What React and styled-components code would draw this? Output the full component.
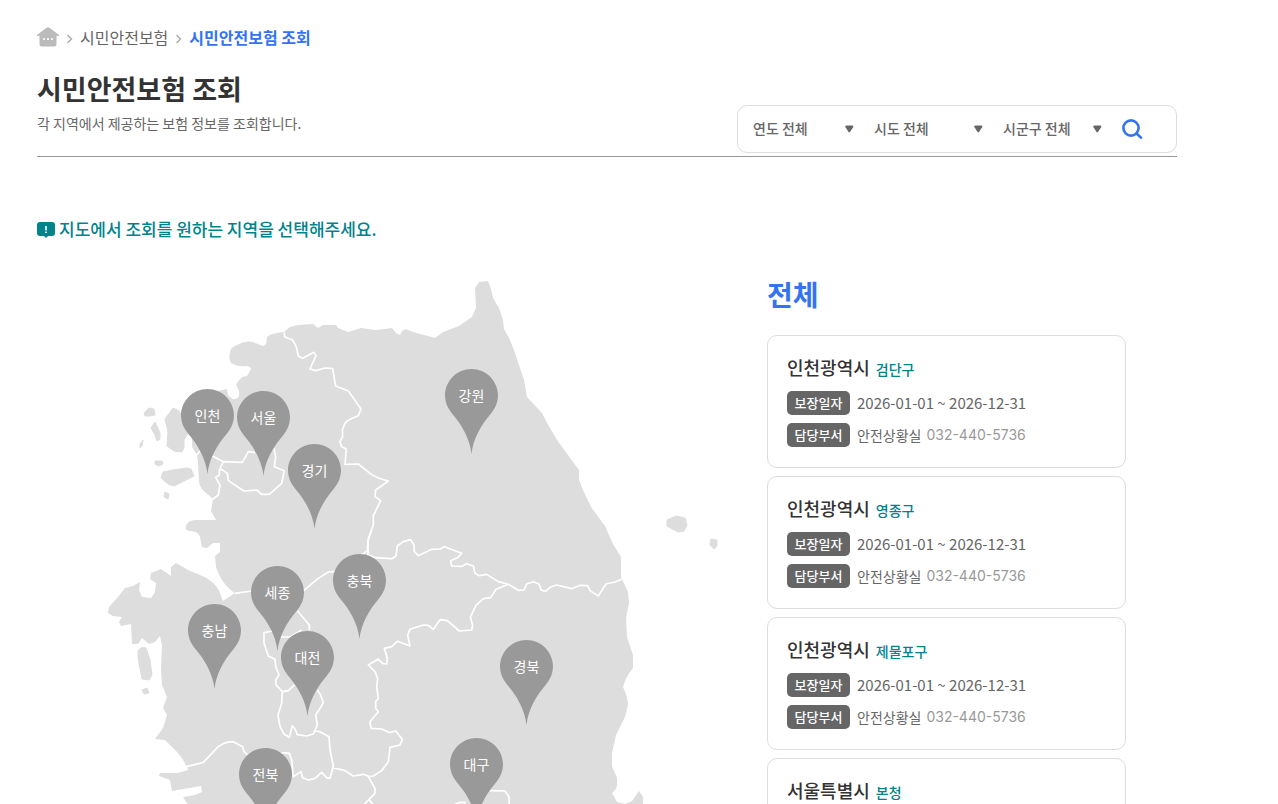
import React, { useState } from 'react';
import styled, { createGlobalStyle } from 'styled-components';

const GlobalStyle = createGlobalStyle`
  * {
    box-sizing: border-box;
  }

  body {
    margin: 0;
    background: #fff;
    color: #666;
    font-family: 'Noto Sans CJK KR', 'Noto Sans', sans-serif;
    font-size: 14px;
  }

  h1, h2, h3, p, dl, dd, ul {
    margin: 0;
    padding: 0;
  }

  button, select {
    font-family: inherit;
  }
`;

const Page = styled.main`
  max-width: 1177px;
  padding: 23px 0 0 37px;
`;

const Breadcrumb = styled.nav`
  display: flex;
  align-items: center;
  height: 28px;
  gap: 7px;
  font-size: 16px;
`;

const Crumb = styled.a`
  display: flex;
  color: ${({ $current }) => ($current ? '#3474f0' : '#666')};
  font-weight: ${({ $current }) => ($current ? 700 : 400)};
  line-height: 24px;
  text-decoration: none;
`;

const Header = styled.header`
  display: flex;
  align-items: flex-end;
  justify-content: space-between;
  padding: 16px 0 3px;
  border-bottom: 1px solid #999;
`;

const Heading = styled.div`
  padding-bottom: 18px;
`;

const Title = styled.h1`
  color: #333;
  font-size: 27px;
  font-weight: 700;
  line-height: 44px;
`;

const Description = styled.p`
  line-height: 24px;
`;

const SearchForm = styled.form`
  display: flex;
  align-items: center;
  gap: 20px;
  width: 440px;
  height: 48px;
  padding: 0 15px;
  border: 1px solid #ddd;
  border-radius: 10px;
`;

const SelectBox = styled.label`
  display: grid;
  align-items: center;
  width: ${({ $width }) => $width}px;

  select,
  svg {
    grid-area: 1 / 1;
  }

  svg {
    justify-self: end;
    pointer-events: none;
  }
`;

const Select = styled.select`
  width: 100%;
  padding: 0 0 2px;
  border: 0;
  background: none;
  color: #666;
  font-size: 14px;
  font-weight: 500;
  line-height: 24px;
  appearance: none;
`;

const SearchButton = styled.button`
  display: flex;
  padding: 0;
  border: 0;
  background: none;
  cursor: pointer;
`;

const Notice = styled.p`
  display: flex;
  align-items: center;
  gap: 4px;
  margin-top: 59px;
  color: #00838a;
  font-size: 17px;
  font-weight: 500;
  line-height: 26px;
`;

const Content = styled.div`
  display: flex;
  justify-content: space-between;
  padding-right: 51px;
  margin-top: 28px;
`;

const MapArea = styled.section`
  position: relative;
  flex: none;
  width: 700px;
`;

const Pin = styled.button`
  position: absolute;
  left: ${({ $x }) => $x}px;
  top: ${({ $y }) => $y}px;
  width: 53px;
  height: 85px;
  padding: 0;
  border: 0;
  background: none;
  color: #fff;
  font-size: 14px;
  cursor: pointer;

  svg {
    display: block;
    fill: ${({ $active }) => ($active ? '#3474f0' : '#999')};
  }

  span {
    position: absolute;
    top: 16px;
    left: 0;
    width: 100%;
    line-height: 20px;
    text-align: center;
  }
`;

const Results = styled.section`
  flex: none;
  width: 359px;
  padding-top: 2px;
`;

const ResultTitle = styled.h2`
  color: #3474f0;
  font-size: 28px;
  font-weight: 700;
  line-height: 44px;
`;

const CardList = styled.ul`
  display: grid;
  gap: 8px;
  margin-top: 19px;
  list-style: none;
`;

const Card = styled.li`
  height: 133px;
  padding: 16px 19px;
  border: 1px solid #ddd;
  border-radius: 10px;
`;

const CardTitle = styled.h3`
  display: flex;
  align-items: baseline;
  gap: 6px;
  margin-bottom: 7px;
  color: #333;
  font-size: 18px;
  font-weight: 500;
  line-height: 30px;

  span {
    color: #00838a;
    font-size: 14px;
  }
`;

const InfoRow = styled.div`
  display: flex;
  align-items: center;
  height: 24px;

  & + & {
    margin-top: 8px;
  }
`;

const Badge = styled.dt`
  width: 63px;
  margin-right: 7px;
  border-radius: 5px;
  background: #666;
  color: #fff;
  font-size: 13px;
  font-weight: 500;
  line-height: 24px;
  text-align: center;
`;

const Period = styled.dd`
  font-size: 15px;
  line-height: 24px;
`;

const Department = styled.dd`
  display: flex;
  gap: 5px;
  line-height: 24px;
`;

const Phone = styled.span`
  color: #999;
  font-family: Inter, sans-serif;
`;

const FILTERS = [
  { id: 'year', label: '연도 전체', width: 101 },
  { id: 'sido', label: '시도 전체', width: 109 },
  { id: 'sigungu', label: '시군구 전체', width: 99 },
];

const PINS = [
  { name: '인천', x: 144, y: 119 },
  { name: '서울', x: 200, y: 121 },
  { name: '경기', x: 251, y: 174 },
  { name: '강원', x: 408, y: 99 },
  { name: '세종', x: 214, y: 296 },
  { name: '충북', x: 296, y: 284 },
  { name: '충남', x: 151, y: 334 },
  { name: '대전', x: 244, y: 361 },
  { name: '경북', x: 463, y: 370 },
  { name: '전북', x: 202, y: 478 },
  { name: '대구', x: 413, y: 468 },
];

const INSURANCES = [
  { city: '인천광역시', district: '검단구' },
  { city: '인천광역시', district: '영종구' },
  { city: '인천광역시', district: '제물포구' },
  { city: '서울특별시', district: '본청' },
];

const COAST = `M284 332L277 333L272 334Q267 336 267 338L266 344L263 346L253 342Q245 340 237 345Q230 348 230 352
  Q228 362 233 364Q238 367 247 366Q251 367 251 369L247 376L242 377L236 384L239 391Q240 397 236 399Q232 400 228 395
  L227 389L218 391L192 420L192 447L197 455L198 462L199 482Q200 488 205 492L213 499L211 511L216 520L195 520Q187 521 186 526
  Q185 531 190 531L196 532Q200 535 200 537L202 547L207 548L213 543L220 543L220 552L215 556L216 567Q218 574 222 580
  Q228 589 235 593L223 601L220 593Q217 586 212 582Q206 577 200 575L188 570L176 563L171 567L171 576L161 569L151 573
  L150 579L156 583L155 592L151 598L142 597L139 590L140 582L133 586L125 588L118 597L109 607L108 613L113 616L122 617
  L119 622L121 626L131 624L132 644L138 644L142 638L149 644L155 642L160 636L162 645L161 670L162 685L167 697L163 708
  L167 715L163 728L155 739L165 740L173 748Q181 755 187 767L188 770L178 773L160 773L159 776L170 780L172 791L201 786
  L202 792L195 795L183 797L187 803L195 815L643 815L643 797L639 791L632 801L625 804L617 802L612 793Q617 789 617 785
  L617 778L612 766L612 753L616 735L625 717L628 705Q628 698 623 687Q626 676 633 668L633 655L627 637L626 618L629 603
  L628 592L621 577L621 557L613 544L605 526L591 507L583 490L579 480L579 470L557 440L547 423L542 413L527 397L524 380
  L517 359L514 350L509 338L504 329L503 320L499 308L493 298L491 289L488 281L479 282L475 288L476 308L472 317L459 326
  L443 332L435 338L413 332L406 329L402 331L400 335L396 333L392 328L385 329L375 330L361 328L348 332L338 328L336 325
  L323 325L318 328L313 324L298 325L290 327Z`;

const ISLANDS = `M144 413L149 408L154 409L155 415L149 416L145 416ZM140 444L143 440L142 446L140 448Z
  M151 428L155 422L160 433L160 439L157 441L155 435ZM165 419L173 408L179 411L190 430L184 440L184 448L182 452L174 451L167 446L168 432Z
  M155 461L162 461L163 464L159 466L155 464ZM163 472L173 470L187 468L191 469L194 476L186 480L174 486L168 484L161 478Z
  M165 492L169 494L168 499L164 497ZM138 651Q141 646 146 648L150 660L152 675L149 680L142 679L138 658Z
  M142 690L147 688L149 693L144 694ZM667 520L676 516L685 518L687 525L684 531L678 532L667 526Z
  M711 539L717 540L717 546L714 549L710 545Z`;

// province borders, each group drawn at three units per pixel from its own origin
const BORDERS = [
  {
    x: 90,
    y: 270,
    d: `M583 187L584 200L608 210L618 228L625 258L638 265L672 247L678 257L660 297L677 302L705 294L728 296L737 348L775 363
      L813 417L805 437Q770 450 765 460L757 480L758 500L750 515L755 530L769 537L765 583L805 582L840 610Q860 625 895 633
      L857 660L855 680L872 692L850 737L850 765L835 805L833 860
      M367 558L400 575L457 577L475 545L495 548M552 535L557 560L553 590L583 602L575 640L538 673L515 673L500 660L462 663
      L415 632L412 610L395 598L388 600M400 575L388 600L388 615L377 622L390 645L385 675L368 688M330 543L320 555`,
  },
  {
    x: 90,
    y: 530,
    d: `M435 190L485 183L580 200L643 180L685 145L715 126L740 124L822 70L833 60M622 242L658 285L658 300M573 321L600 321L635 300
      M548 303L522 308L522 340L535 378L555 388L557 410L567 435L557 450L558 465L577 485L595 482L613 465
      M577 485L575 520L564 555L570 590L583 613L598 622L607 587L615 597L622 614L650 618L670 612L682 585L677 555L690 535L700 518
      L692 495L682 480M675 603L690 605L717 620L720 660L730 708L720 745L710 743L695 727L675 745L655 750L638 743L633 725L610 740
      L605 690L598 670L580 668L570 672M290 710L340 697L385 650Q405 635 430 635L458 650L462 665L473 675
      M728 713L765 722L790 738L820 733L835 738`,
  },
  {
    x: 360,
    y: 530,
    d: `M35 0L25 30L22 55L27 75L45 83L95 86L108 78L112 48L130 35L152 29L162 45L163 65L175 77L215 58L240 57L253 50L305 70L295 82
      L272 92L275 108L305 109L320 101L340 108L345 130L358 137L380 133L415 155L445 163L475 181L492 180L500 162L520 155L538 163
      L543 180L557 184L570 172L590 165L635 176L660 166L683 167L690 182L715 198L738 162L765 156L787 147
      M445 163L408 178L392 203L370 206L348 226L331 262L338 285L335 300L298 303L262 272L240 269L220 298L205 286L190 285L150 298
      L143 315L150 348L112 334L95 350L73 355L82 385L80 402L67 400L55 387L25 405L45 425L53 445L50 470L55 505L47 515L47 535
      L55 545L30 575L33 595L65 597L90 608L107 603L127 628L120 645L90 652L85 695L65 722L40 738L25 740L45 775L45 790L10 825
      M27 808L40 825M390 782L435 783L447 800L448 835M280 825L300 817L318 818`,
  },
];

const HomeIcon = () => (
  <svg width="22" height="20" viewBox="0 0 22 20" aria-label="홈" role="img">
    <path
      d="M10 .5Q11 -.2 12 .5L21.5 7.5Q22.5 9 21 9H19.5V17Q19.5 19.5 17 19.5H5Q2.5 19.5 2.5 17V9H1Q-.5 9 .5 7.5Z"
      fill="#bbb"
    />
    <path d="M6 11h2v2H6zM10 11h2v2h-2zM14 11h2v2h-2z" fill="#f1f1f1" />
  </svg>
);

const Chevron = () => (
  <svg width="7" height="12" viewBox="0 0 7 12" aria-hidden="true">
    <path d="M1.5 4L5.5 8L1.5 12" fill="none" stroke="#aaa" strokeWidth="1.4" />
  </svg>
);

const Arrow = () => (
  <svg width="9" height="8" viewBox="0 0 9 8" aria-hidden="true">
    <path d="M1 .5H7.5Q8.7 .8 8.3 2L5.2 6.8Q4.3 7.8 3.4 6.8L.3 2Q0 .8 1 .5Z" fill="#666" />
  </svg>
);

const SearchIcon = () => (
  <svg width="21" height="20" viewBox="0 0 21 20" aria-hidden="true">
    <g fill="none" stroke="#3474f0" strokeWidth="2.6">
      <circle cx="9" cy="9" r="7.6" />
      <path d="M14.5 14.5L19 18.6" strokeLinecap="round" />
    </g>
  </svg>
);

const NoticeIcon = () => (
  <svg width="18" height="17" viewBox="0 0 18 17" aria-hidden="true">
    <path d="M3 1H15Q18 1 18 4V12Q18 15 15 15H11L9 17L7 15H3Q0 15 0 12V4Q0 1 3 1Z" fill="#00838a" />
    <path d="M8.2 5H9.8V9.5H8.2ZM8.2 10.5H9.8V12H8.2Z" fill="#fff" />
  </svg>
);

const KoreaMap = () => (
  <svg width="700" height="540" viewBox="37 270 700 540" aria-hidden="true">
    <path d={COAST} fill="#ddd" />
    <path d={ISLANDS} fill="#ddd" stroke="#ddd" strokeLinejoin="round" />
    {BORDERS.map(({ x, y, d }) => (
      <path
        key={`${x}-${y}`}
        d={d}
        transform={`translate(${x} ${y}) scale(.33333)`}
        fill="none"
        stroke="#fff"
        strokeWidth="5"
        strokeLinejoin="round"
      />
    ))}
  </svg>
);

const RegionPin = ({ name, x, y, active, onClick }) => (
  <Pin type="button" $x={x} $y={y} $active={active} onClick={onClick}>
    <svg width="53" height="85" viewBox="0 0 53 85" aria-hidden="true">
      <path d="M26.5 0C41.1 0 53 11.9 53 26.5C53 33 50.5 39 46 44.5C36 56 28 70 26.5 85C25 70 17 56 7 44.5C2.5 39 0 33 0 26.5C0 11.9 11.9 0 26.5 0Z" />
    </svg>
    <span>{name}</span>
  </Pin>
);

const InsuranceCard = ({ city, district }) => (
  <Card>
    <CardTitle>
      {city} <span>{district}</span>
    </CardTitle>
    <dl>
      <InfoRow>
        <Badge>보장일자</Badge>
        <Period>2026-01-01 ~ 2026-12-31</Period>
      </InfoRow>
      <InfoRow>
        <Badge>담당부서</Badge>
        <Department>
          안전상황실 <Phone>032-440-5736</Phone>
        </Department>
      </InfoRow>
    </dl>
  </Card>
);

const App = () => {
  const [region, setRegion] = useState(null);

  return (
    <>
      <GlobalStyle />
      <Page>
        <Breadcrumb>
          <Crumb href="#home">
            <HomeIcon />
          </Crumb>
          <Chevron />
          <Crumb href="#insurance">시민안전보험</Crumb>
          <Chevron />
          <Crumb href="#search" $current>
            시민안전보험 조회
          </Crumb>
        </Breadcrumb>
        <Header>
          <Heading>
            <Title>시민안전보험 조회</Title>
            <Description>각 지역에서 제공하는 보험 정보를 조회합니다.</Description>
          </Heading>
          <SearchForm onSubmit={e => e.preventDefault()}>
            {FILTERS.map(({ id, label, width }) => (
              <SelectBox key={id} htmlFor={id} $width={width}>
                <Select id={id} aria-label={label}>
                  <option>{label}</option>
                </Select>
                <Arrow />
              </SelectBox>
            ))}
            <SearchButton type="submit" aria-label="검색">
              <SearchIcon />
            </SearchButton>
          </SearchForm>
        </Header>
        <Notice>
          <NoticeIcon />
          지도에서 조회를 원하는 지역을 선택해주세요.
        </Notice>
        <Content>
          <MapArea>
            <KoreaMap />
            {PINS.map(pin => (
              <RegionPin
                key={pin.name}
                {...pin}
                active={region === pin.name}
                onClick={() => setRegion(pin.name)}
              />
            ))}
          </MapArea>
          <Results>
            <ResultTitle>{region || '전체'}</ResultTitle>
            <CardList>
              {INSURANCES.map(item => (
                <InsuranceCard key={item.district} {...item} />
              ))}
            </CardList>
          </Results>
        </Content>
      </Page>
    </>
  );
};

export default App;
